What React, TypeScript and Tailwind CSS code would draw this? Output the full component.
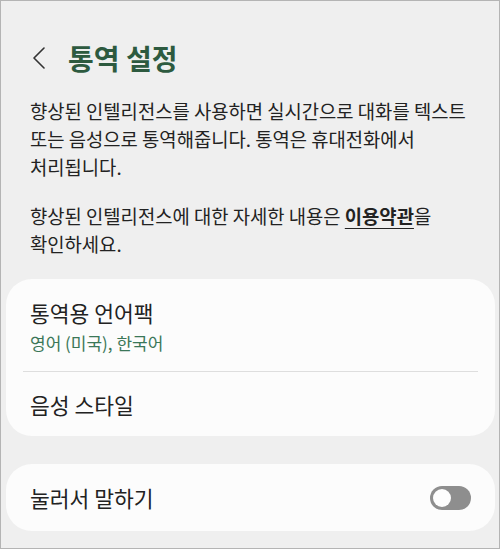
import React from "react";

function Toggle() {
  return (
    <div className="flex h-[24px] w-[41px] items-center rounded-full bg-[#8e8e8e] px-[3px]">
      <div className="h-[18px] w-[18px] rounded-full bg-[#fdfdfd]" />
    </div>
  );
}

export default function App() {
  return (
    <div
      className="h-[549px] w-[500px] overflow-hidden border border-[#b4b4b4] bg-[#efefef] text-[#222]"
      style={{ fontFamily: '"Noto Sans CJK KR", "Noto Sans", sans-serif' }}
    >
      <div className="mt-[32px] flex h-[50px] items-center">
        <svg
          className="ml-[31px]"
          width="14"
          height="22"
          viewBox="0 0 14 22"
          fill="none"
          stroke="#333"
          strokeWidth="1.6"
          strokeLinecap="round"
          strokeLinejoin="round"
        >
          <path d="M12 1 L2 11 L12 21" />
        </svg>
        <h1 className="ml-[22px] text-[28px] font-bold leading-none text-[#2d5a3f]">
          통역 설정
        </h1>
      </div>

      <div className="whitespace-nowrap px-[29px] text-[18.8px] leading-[28px]">
        <p className="mt-[14px]">
          향상된 인텔리전스를 사용하면 실시간으로 대화를 텍스트
          <br />
          또는 음성으로 통역해줍니다. 통역은 휴대전화에서
          <br />
          처리됩니다.
        </p>
        <p className="mt-[21px]">
          향상된 인텔리전스에 대한 자세한 내용은{" "}
          <span className="font-bold underline underline-offset-4">이용약관</span>을
          <br />
          확인하세요.
        </p>
      </div>

      <div className="ml-[5px] mr-[4px] mt-[21px] rounded-[26px] bg-[#fcfcfc]">
        <div className="px-[24px] pb-[16px] pt-[20px]">
          <div className="text-[21.5px] leading-[28px]">통역용 언어팩</div>
          <div className="mt-[4px] text-[17px] leading-[24px] text-[#3b7758]">
            영어 (미국), 한국어
          </div>
        </div>
        <div className="mx-[17px] h-px bg-[#dedede]" />
        <div className="px-[24px] pb-[17px] pt-[19px] text-[21.5px] leading-[28px]">
          음성 스타일
        </div>
      </div>

      <div className="ml-[5px] mr-[4px] mt-[28px] flex h-[67px] items-center justify-between rounded-[26px] bg-[#fcfcfc] pl-[24px] pr-[24px]">
        <span className="text-[21.5px] leading-[28px]">눌러서 말하기</span>
        <Toggle />
      </div>
    </div>
  );
}
